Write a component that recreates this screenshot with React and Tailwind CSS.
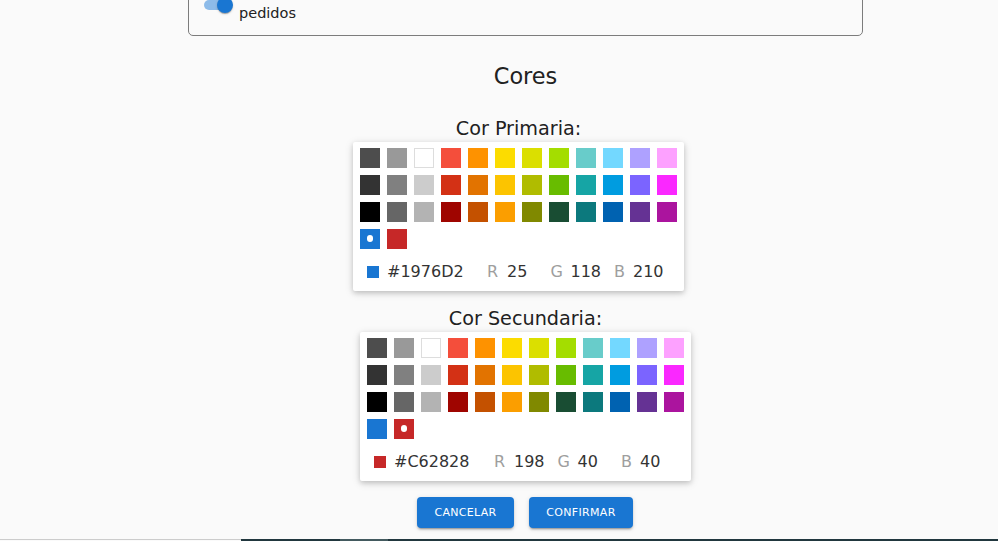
import React from "react";

const COLORS = [
  "#4D4D4D", "#999999", "#FFFFFF", "#F44E3B", "#FE9200", "#FCDC00", "#DBDF00", "#A4DD00", "#68CCCA", "#73D8FF", "#AEA1FF", "#FDA1FF",
  "#333333", "#808080", "#CCCCCC", "#D33115", "#E27300", "#FCC400", "#B0BC00", "#68BC00", "#16A5A5", "#009CE0", "#7B64FF", "#FA28FF",
  "#000000", "#666666", "#B3B3B3", "#9F0500", "#C45100", "#FB9E00", "#808900", "#194D33", "#0C797D", "#0062B1", "#653294", "#AB149E",
  "#1976D2", "#C62828",
];

function Picker({ selected, r, g, b }) {
  return (
    <div className="w-[331px] h-[149px] bg-white rounded-[2px] shadow-[0_2px_10px_rgba(0,0,0,0.12),0_2px_5px_rgba(0,0,0,0.16)] pt-[6px] px-[7px] flex flex-col">
      <div className="grid grid-cols-[repeat(12,20px)] gap-x-[7px] gap-y-[6.8px]">
        {COLORS.map((c) => (
          <div
            key={c}
            className={
              "w-[20px] h-[20px] flex items-center justify-center" +
              (c === "#FFFFFF" ? " shadow-[inset_0_0_0_1px_#dddddd]" : "")
            }
            style={{ backgroundColor: c }}
          >
            {c === selected && <div className="w-[6.5px] h-[6.5px] rounded-full bg-white" />}
          </div>
        ))}
      </div>
      <div className="flex-1 flex items-center pt-[5px] pl-[7px] text-[16px] leading-[20px] text-[#333]">
        <div className="w-[120px] flex items-center">
          <div className="w-[12px] h-[12px] mr-[8px]" style={{ backgroundColor: selected }} />
          <span>{selected}</span>
        </div>
        <div className="w-[63.5px] flex">
          <span className="w-[20px] text-[#9e9e9e]">R</span>
          <span>{r}</span>
        </div>
        <div className="w-[63.5px] flex">
          <span className="w-[20px] text-[#9e9e9e]">G</span>
          <span>{g}</span>
        </div>
        <div className="w-[60px] flex">
          <span className="w-[19px] text-[#9e9e9e]">B</span>
          <span>{b}</span>
        </div>
      </div>
    </div>
  );
}

export default function App() {
  return (
    <div className="h-[541px] w-full overflow-hidden flex flex-col bg-[#fafafa] font-['DejaVu_Sans',sans-serif] text-[#212121]">
      <div className="flex-1 overflow-hidden pl-[53px]">
        <div className="flex flex-col items-center">
          {/* top card (scrolled) */}
          <div className="w-[675px] -mt-[25px] border border-[#7c7c7c] rounded-[5px] pt-[16.5px] pl-[8px] pb-[11px]">
            <div className="flex items-start">
              <div className="relative w-[40px] h-[24px] shrink-0">
                <div className="absolute left-[7px] top-[7px] w-[26px] h-[10px] rounded-[7px] bg-[#8dbbe9]" />
                <div className="absolute left-[20px] top-[4px] w-[16px] h-[16px] rounded-full bg-[#1976d2] shadow-[0_2px_1px_-1px_rgba(0,0,0,0.2),0_1px_1px_rgba(0,0,0,0.14),0_1px_3px_rgba(0,0,0,0.12)]" />
              </div>
              <span className="ml-[2px] mt-[10px] text-[14.5px] leading-[21.75px] text-[#222]">pedidos</span>
            </div>
          </div>

          <h2 className="mt-[27px] text-[22.4px] leading-[26px] font-normal">Cores</h2>

          <div className="mr-[14px] mt-[29px] flex flex-col items-center">
            <div className="text-[19.2px] leading-[22px]">Cor Primaria:</div>
            <div className="mt-[2px]">
              <Picker selected="#1976D2" r="25" g="118" b="210" />
            </div>
          </div>

          <div className="mt-[17px] flex flex-col items-center">
            <div className="text-[19.2px] leading-[22px]">Cor Secundaria:</div>
            <div className="mt-[2px]">
              <Picker selected="#C62828" r="198" g="40" b="40" />
            </div>
          </div>

          <div className="mt-[16px] flex gap-[15px] -ml-[1px]">
            <button className="h-[30.5px] w-[97px] pt-[2px] rounded-[4px] bg-[#1976d2] text-white text-[11px] font-medium tracking-[0.32px] uppercase shadow-[0_3px_1px_-2px_rgba(0,0,0,0.2),0_2px_2px_rgba(0,0,0,0.14),0_1px_5px_rgba(0,0,0,0.12)]">
              Cancelar
            </button>
            <button className="h-[30.5px] w-[104px] pt-[2px] rounded-[4px] bg-[#1976d2] text-white text-[11px] font-medium tracking-[0.32px] uppercase shadow-[0_3px_1px_-2px_rgba(0,0,0,0.2),0_2px_2px_rgba(0,0,0,0.14),0_1px_5px_rgba(0,0,0,0.12)]">
              Confirmar
            </button>
          </div>
        </div>
      </div>
      <div className="h-[2px] flex shrink-0">
        <div className="w-[241px] border-t border-[#cccccc]" />
        <div className="flex-1 flex bg-[#21373e]">
          <div className="w-[99px]" />
          <div className="w-[48px] bg-[#435a5f]" />
        </div>
      </div>
    </div>
  );
}
